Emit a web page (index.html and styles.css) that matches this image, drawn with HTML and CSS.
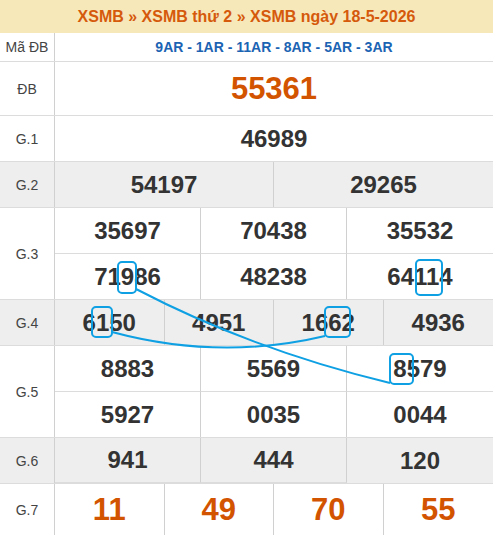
FILE: index.html
```html
<!doctype html>
<html lang="vi">
<head>
    <meta charset="UTF-8">
    <title>XSMB ngày 18-5-2026</title>
    <link rel="stylesheet" href="styles.css">
</head>
<body>
<div class="kq">
    <div class="kq-title">XSMB » XSMB thứ 2 » XSMB ngày 18-5-2026</div>

    <div class="kq-row row-code">
        <div class="kq-label">Mã ĐB</div>
        <div class="kq-nums cols-1"><span class="code">9AR - 1AR - 11AR - 8AR - 5AR - 3AR</span></div>
    </div>
    <div class="kq-row row-db">
        <div class="kq-label">ĐB</div>
        <div class="kq-nums cols-1"><span class="num big red">55361</span></div>
    </div>
    <div class="kq-row">
        <div class="kq-label">G.1</div>
        <div class="kq-nums cols-1"><span class="num">46989</span></div>
    </div>
    <div class="kq-row gray">
        <div class="kq-label">G.2</div>
        <div class="kq-nums cols-2"><span class="num">54197</span><span class="num">29265</span></div>
    </div>
    <div class="kq-row">
        <div class="kq-label">G.3</div>
        <div class="kq-nums cols-3">
            <span class="num">35697</span><span class="num">70438</span><span class="num">35532</span>
            <span class="num">71986</span><span class="num">48238</span><span class="num">64114</span>
        </div>
    </div>
    <div class="kq-row gray">
        <div class="kq-label">G.4</div>
        <div class="kq-nums cols-4">
            <span class="num">6150</span><span class="num">4951</span><span class="num">1662</span><span class="num">4936</span>
        </div>
    </div>
    <div class="kq-row">
        <div class="kq-label">G.5</div>
        <div class="kq-nums cols-3">
            <span class="num">8883</span><span class="num">5569</span><span class="num">8579</span>
            <span class="num">5927</span><span class="num">0035</span><span class="num">0044</span>
        </div>
    </div>
    <div class="kq-row gray">
        <div class="kq-label">G.6</div>
        <div class="kq-nums cols-3"><span class="num">941</span><span class="num">444</span><span class="num">120</span></div>
    </div>
    <div class="kq-row row-g7">
        <div class="kq-label">G.7</div>
        <div class="kq-nums cols-4">
            <span class="num big red">11</span><span class="num big red">49</span><span class="num big red">70</span><span class="num big red">55</span>
        </div>
    </div>

    <!-- lô tô highlight -->
    <svg class="kq-mark" width="493" height="535" viewBox="0 0 493 535">
        <g fill="none" stroke="#0ea0e3" stroke-width="2">
            <rect x="118" y="262" width="18" height="31" rx="4"/>
            <rect x="416" y="260" width="26" height="35" rx="4"/>
            <rect x="92" y="307" width="20" height="30" rx="4"/>
            <rect x="325" y="307" width="25" height="30" rx="4"/>
            <rect x="390" y="354" width="23" height="30" rx="4"/>
            <path d="M136 289 Q253 350 390 383"/>
            <path d="M112 332 Q220 361 325 336"/>
        </g>
    </svg>
</div>
</body>
</html>
```

FILE: styles.css
```css
*{margin: 0; padding: 0; box-sizing: border-box;}
html, body{width: 100%; height: 100%; background: #fff;}
body{font-family: Arial, "Liberation Sans", sans-serif; color: #333;}

.kq{position: relative; width: 493px;}
.kq-title{height: 33px; background: #f7e8ba; color: #d55a0c; font-size: 16px; font-weight: bold;
    display: flex; align-items: center; justify-content: center;}

.kq-row{display: grid; grid-template-columns: 55px 1fr; border-bottom: 1px solid #dcdcdc;}
.kq-row.gray{background: #eee;}
.kq-label{border-right: 1px solid #d0d0d0; font-size: 14px; color: #444;
    display: flex; align-items: center; justify-content: center;}

.kq-nums{display: grid;}
.kq-nums.cols-1{grid-template-columns: 1fr;}
.kq-nums.cols-2{grid-template-columns: repeat(2, 1fr);}
.kq-nums.cols-3{grid-template-columns: repeat(3, 1fr);}
.kq-nums.cols-4{grid-template-columns: repeat(4, 1fr);}

.num{height: 45px; display: flex; align-items: center; justify-content: center;
    font-size: 24px; font-weight: bold; color: #333; border-right: 1px solid #d0d0d0;}
.kq-nums > .num:last-child{border-right: 0;}
.cols-3 > .num:nth-child(3n){border-right: 0;}
.cols-3 > .num:nth-child(-n+3){border-bottom: 1px solid #dcdcdc;}
.cols-3 > .num:nth-child(-n+3):last-child{border-bottom: 0;}
.cols-1 > .num{border-right: 0;}
.kq-nums.cols-3:has(> .num:nth-child(4)) > .num:nth-child(-n+3){height: 46px;}

.row-code .kq-nums{height: 28px; display: flex; align-items: center; justify-content: center;}
.code{color: #1b63b3; font-size: 14px; font-weight: bold;}
.row-db .num{height: 53px;}
.row-g7 .num{height: 51px;}
.num.big{font-size: 31px;}
.num.red{color: #d35400;}

.kq-mark{position: absolute; left: 0; top: 0; pointer-events: none;}
```
